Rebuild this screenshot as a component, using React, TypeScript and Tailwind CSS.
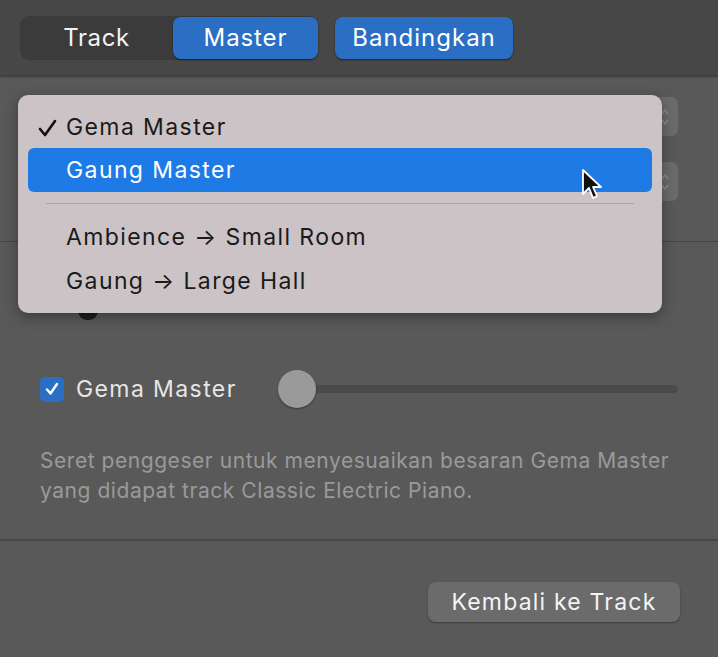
import React from "react"

const font = { fontFamily: "Inter, 'Liberation Sans', sans-serif" }

// ── popup row hidden behind the open menu ─────────────────────
function PopupRow() {
    return (
        <div className="flex h-[39px] items-center justify-end rounded-[7px] bg-[#5f5f5f]">
            <div className="flex h-[39px] w-[26px] items-center justify-center rounded-[7px] bg-[#6b6b6b]">
                <svg width="10" height="20" viewBox="0 0 10 20" fill="none" stroke="#8a8a8a" strokeWidth="1.6">
                    <path d="M2 7 L5 3 L8 7" />
                    <path d="M2 13 L5 17 L8 13" />
                </svg>
            </div>
        </div>
    )
}

function Menu() {
    return (
        <div className="absolute left-[18px] top-[95px] w-[644px] rounded-[10px] bg-[#cbc3c6] px-[10px] pt-[11px] pb-[10px] text-[23px] tracking-[1.4px] text-[#1a1a1a] shadow-[0_4px_14px_rgba(0,0,0,0.35)]">
            <div className="relative flex h-[42px] items-center pl-[38px]">
                <svg className="absolute left-[10px] top-[13px]" width="19" height="18" viewBox="0 0 19 18" fill="none" stroke="#111" strokeWidth="2.6" strokeLinecap="round" strokeLinejoin="round">
                    <path d="M2 10 L7 16 L17 2" />
                </svg>
                Gema Master
            </div>
            <div className="relative flex h-[44px] items-center rounded-[6px] bg-[#1e7ae4] pl-[38px] text-white">
                Gaung Master
                <svg className="absolute left-[552px] top-[20px]" width="26" height="36" viewBox="0 0 26 36">
                    <path d="M3 2 L3 26 L9 20 L13 30 L17 28 L13 19 L21 19 Z" fill="#111" stroke="#fff" strokeWidth="1.8" strokeLinejoin="round" />
                </svg>
            </div>
            <div className="mx-[18px] mt-[11px] mb-[11px] h-px bg-[#a9a2a6]" />
            <div className="flex h-[44px] items-center pl-[38px]">Ambience → Small Room</div>
            <div className="flex h-[44px] items-center pl-[38px]">Gaung → Large Hall</div>
        </div>
    )
}

export default function App() {
    return (
        <div className="relative h-[657px] w-[718px] overflow-hidden bg-[#595959]" style={font}>
            {/* top bar */}
            <div className="flex h-[76px] items-center border-b border-[#3e3e3e] bg-[#474747] px-[20px] shadow-[0_1px_2px_rgba(0,0,0,0.3)]">
                <div className="flex h-[44px] w-[298px] items-center rounded-[9px] bg-[#3b3b3b]">
                    <div className="flex w-[153px] justify-center text-[24px] tracking-[0.6px] text-[#f2f2f2]">Track</div>
                    <div className="flex h-[42px] w-[145px] items-center justify-center rounded-[8px] bg-[#2b6fc4] text-[24px] tracking-[0.9px] text-white shadow-[0_1px_2px_rgba(0,0,0,0.5)]">
                        Master
                    </div>
                </div>
                <div className="ml-[17px] flex h-[42px] w-[178px] items-center justify-center rounded-[8px] bg-[#2b6fc4] text-[24px] tracking-[1px] text-white shadow-[0_1px_2px_rgba(0,0,0,0.5)]">
                    Bandingkan
                </div>
            </div>

            {/* section 1 */}
            <div className="flex h-[166px] flex-col gap-[26px] border-b border-[#444] pl-[18px] pr-[40px] pt-[21px]">
                <PopupRow />
                <PopupRow />
            </div>

            {/* section 2 */}
            <div className="flex h-[299px] flex-col border-b-2 border-[#474747] px-[40px]">
                <div className="mt-[60px] ml-[38px] h-[18px] w-[20px] rounded-full bg-[#1e1e1e]" />
                <div className="mt-[50px] flex items-center">
                    <div className="flex h-[25px] w-[24px] items-center justify-center rounded-[5px] bg-[#2b6fc4]">
                        <svg width="16" height="16" viewBox="0 0 16 16" fill="none" stroke="#fff" strokeWidth="2.4" strokeLinecap="round" strokeLinejoin="round">
                            <path d="M3 8.5 L6.5 12.5 L13 3" />
                        </svg>
                    </div>
                    <span className="ml-[12px] w-[202px] text-[23px] tracking-[1.4px] text-[#e6e6e6]">Gema Master</span>
                    <div className="flex flex-1 items-center">
                        <div className="z-10 h-[38px] w-[38px] rounded-full bg-[#9a9a9a] shadow-[0_1px_2px_rgba(0,0,0,0.4)]" />
                        <div className="-ml-[4px] h-[8px] flex-1 rounded-full bg-[#4b4b4b]" />
                    </div>
                </div>
                <p className="mt-[38px] whitespace-nowrap text-[21px] leading-[30px] tracking-[0.55px] text-[#9a9a9a]">
                    Seret penggeser untuk menyesuaikan besaran Gema Master
                    <br />
                    yang didapat track Classic Electric Piano.
                </p>
            </div>

            {/* section 3 */}
            <div className="flex justify-end pr-[38px] pt-[41px]">
                <button className="flex h-[40px] w-[252px] items-center justify-center rounded-[8px] bg-[#6b6b6b] text-[23px] tracking-[1.2px] text-[#f4f4f4] shadow-[0_1px_2px_rgba(0,0,0,0.35)]">
                    Kembali ke Track
                </button>
            </div>

            <Menu />
        </div>
    )
}
